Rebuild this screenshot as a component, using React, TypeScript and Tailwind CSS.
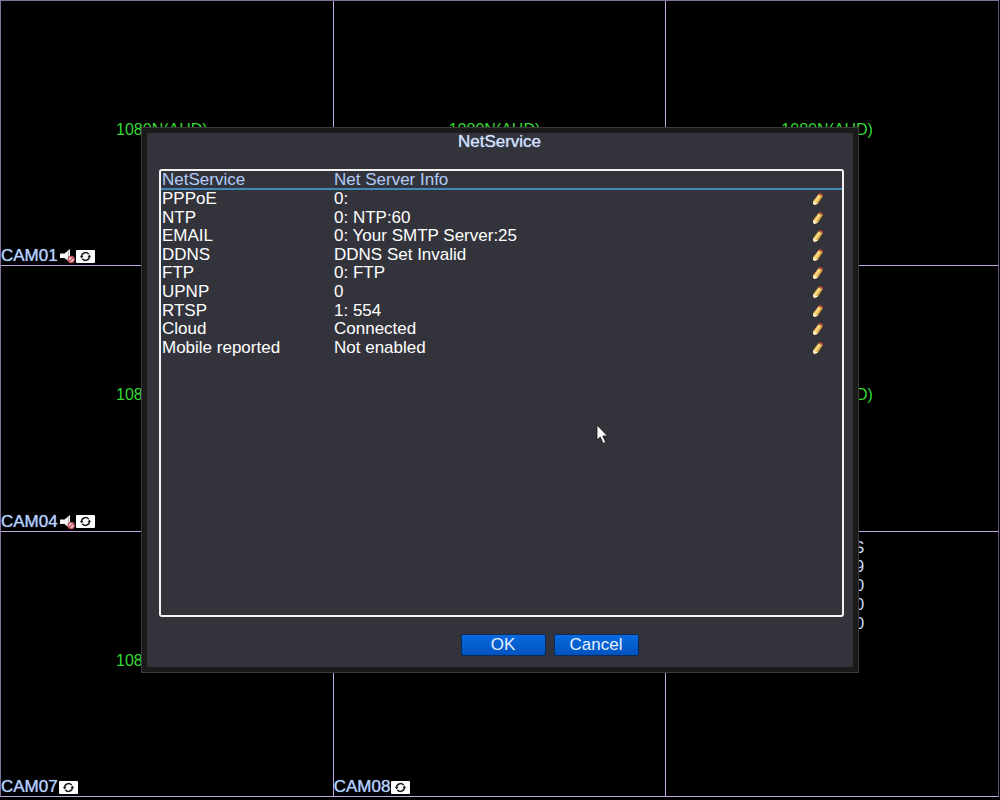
import { useState } from 'react';

interface Camera {
  id: number;
  name?: string;
  signal?: string;
  muted?: boolean;
  stats?: string[];
}

const cameras: Camera[] = [
  { id: 1, name: 'CAM01', signal: '1080N(AHD)', muted: true },
  { id: 2, signal: '1080N(AHD)' },
  { id: 3, signal: '1080N(AHD)' },
  { id: 4, name: 'CAM04', signal: '1080N(AHD)', muted: true },
  { id: 5 },
  { id: 6, signal: '1080N(AHD)' },
  { id: 7, name: 'CAM07', signal: '1080N(AHD)' },
  { id: 8, name: 'CAM08' },
  { id: 9, stats: ['S', '9', '0', '0', '0'] },
];

const services = [
  { name: 'PPPoE', info: '0:' },
  { name: 'NTP', info: '0: NTP:60' },
  { name: 'EMAIL', info: '0: Your SMTP Server:25' },
  { name: 'DDNS', info: 'DDNS Set Invalid' },
  { name: 'FTP', info: '0: FTP' },
  { name: 'UPNP', info: '0' },
  { name: 'RTSP', info: '1: 554' },
  { name: 'Cloud', info: 'Connected' },
  { name: 'Mobile reported', info: 'Not enabled' },
];

const MuteIcon = () => (
  <svg width="17" height="16" viewBox="0 0 17 16" aria-hidden="true">
    <path d="M1 5.500h4.500L11 1v13.500L5.500 10H1z" fill="#f8f8f8" />
    <path d="M9.500 3v8" stroke="#999" strokeWidth="0.700" />
    <circle cx="12.200" cy="11.500" r="3" fill="#fbe9e9" stroke="#c4505a" strokeWidth="1.300" />
    <path d="M10 13.700l4.400-4.400" stroke="#c4505a" strokeWidth="1.300" />
  </svg>
);

const RecordIcon = () => (
  <svg width="19" height="13" viewBox="0 0 19 13" aria-hidden="true">
    <rect width="19" height="13" rx="1" fill="#fff" />
    <path d="M5.600 7.200A4 4 0 0 1 12.700 4.200" fill="none" stroke="#1c1c1c" strokeWidth="1.500" />
    <path d="M13.400 5.800A4 4 0 0 1 6.300 8.800" fill="none" stroke="#1c1c1c" strokeWidth="1.500" />
    <path d="M4 6h3.400L5.600 8.500z" fill="#1c1c1c" />
    <path d="M11.600 7h3.400L13.400 4.500z" fill="#1c1c1c" />
  </svg>
);

const PencilIcon = () => (
  <svg width="12" height="14" viewBox="0 0 12 14" aria-hidden="true">
    <path d="M6.500 2L10.800 4 5.800 11.800 2.500 13 1 11.800 1.200 9z" fill="#e6b04a" />
    <path d="M7.400 3.500L3.200 10" stroke="#ffe29a" strokeWidth="1.800" />
    <path d="M1.200 9L5.800 11.800 2.500 13 1 11.800z" fill="#fff0d2" />
    <path d="M6.800 1.800L8.200 0.800 11 2.600 10.600 4.200z" fill="#b8453c" />
  </svg>
);

const CameraCell = ({ camera }: { camera: Camera }) => (
  <section className="grid border-r border-b border-[#c0a4e6] overflow-hidden nth-[3n]:border-r-[#5f5478]">
    {camera.signal && (
      <p className="col-start-1 row-start-1 place-self-center pr-2.5 pb-1.5 text-base leading-5 text-[#35d835]">
        {camera.signal}
      </p>
    )}
    {camera.name && (
      <div className="col-start-1 row-start-1 self-end flex items-center">
        <span className="leading-[18px] text-[#b5d0fa] [text-shadow:0_0_1px_#8fb4ee]">{camera.name}</span>
        <span className="flex items-center pl-px">
          {camera.muted && <MuteIcon />}
          <RecordIcon />
        </span>
      </div>
    )}
    {camera.stats && (
      <ul className="col-start-1 row-start-1 w-[198px] pt-1.5 text-right leading-[19px] text-[#c3d8fa]">
        {camera.stats.map((value, index) => (
          <li key={index}>{value}</li>
        ))}
      </ul>
    )}
  </section>
);

const App = () => {
  const [open, setOpen] = useState(true);

  return (
    <div className="min-h-screen bg-black text-[17px] font-['Liberation_Sans',Arial,sans-serif]">
      <main className="h-screen pr-px pb-[3px]">
        <div className="grid grid-cols-3 grid-rows-3 h-full border-t border-l border-[#8172a0]">
          {cameras.map((camera) => (
            <CameraCell key={camera.id} camera={camera} />
          ))}
        </div>
      </main>

      {open && (
        <div className="fixed inset-0 flex px-[141px] py-[127px]">
          <div
            role="dialog"
            aria-labelledby="dialog-title"
            className="flex-1 flex border border-[#3c3c3c] bg-[#1a1a1b] p-[5px]"
          >
            <div className="flex-1 flex flex-col bg-[#33333b] pl-3 pr-[9px] pb-[11px]">
              <h1
                id="dialog-title"
                className="mb-[18px] pr-1 text-center leading-[18px] text-[#d3e3fd] [text-shadow:0_0_1px_#a9c6f5]"
              >
                NetService
              </h1>

              <div className="flex-1 border-2 border-[#f2f2f2] rounded-[3px]">
                <table className="w-full h-[186px] table-fixed border-separate border-spacing-0 text-left text-white">
                  <thead>
                    <tr className="leading-[17px] text-[#b4cdf8]">
                      <th className="w-[173px] p-0 pl-px font-normal border-b-2 border-[#4389b8]">NetService</th>
                      <th className="p-0 font-normal border-b-2 border-[#4389b8]">Net Server Info</th>
                      <th className="w-[34px] p-0 border-b-2 border-[#4389b8]" aria-label="Edit"></th>
                    </tr>
                  </thead>
                  <tbody className="leading-[18px]">
                    {services.map((service) => (
                      <tr key={service.name}>
                        <td className="p-0 pl-px">{service.name}</td>
                        <td className="p-0">{service.info}</td>
                        <td className="p-0">
                          <button
                            type="button"
                            aria-label={`Edit ${service.name}`}
                            className="block pl-1 cursor-pointer"
                          >
                            <PencilIcon />
                          </button>
                        </td>
                      </tr>
                    ))}
                  </tbody>
                </table>
              </div>

              <div className="flex justify-center gap-2 mt-[17px] pl-24">
                <button
                  type="button"
                  onClick={() => setOpen(false)}
                  className="w-[85px] h-[22px] rounded-xs border border-[#0b2a5c] bg-linear-to-b from-[#0a6ae0] to-[#0053bd] leading-5 text-[#e4f1ff]"
                >
                  OK
                </button>
                <button
                  type="button"
                  onClick={() => setOpen(false)}
                  className="w-[85px] h-[22px] rounded-xs border border-[#0b2a5c] bg-linear-to-b from-[#0a6ae0] to-[#0053bd] leading-5 text-[#e4f1ff]"
                >
                  Cancel
                </button>
              </div>
            </div>
          </div>
        </div>
      )}

      {/* mouse pointer */}
      <svg
        className="fixed left-[596px] top-[424px] pointer-events-none"
        width="13"
        height="21"
        viewBox="0 0 13 21"
        aria-hidden="true"
      >
        <path
          d="M1 1v15l3.200-3 3 6.500 2.500-1.200-2.900-6.300H11.500z"
          fill="#fff"
          stroke="#111"
          strokeWidth="0.800"
        />
      </svg>
    </div>
  );
};

export default App;
